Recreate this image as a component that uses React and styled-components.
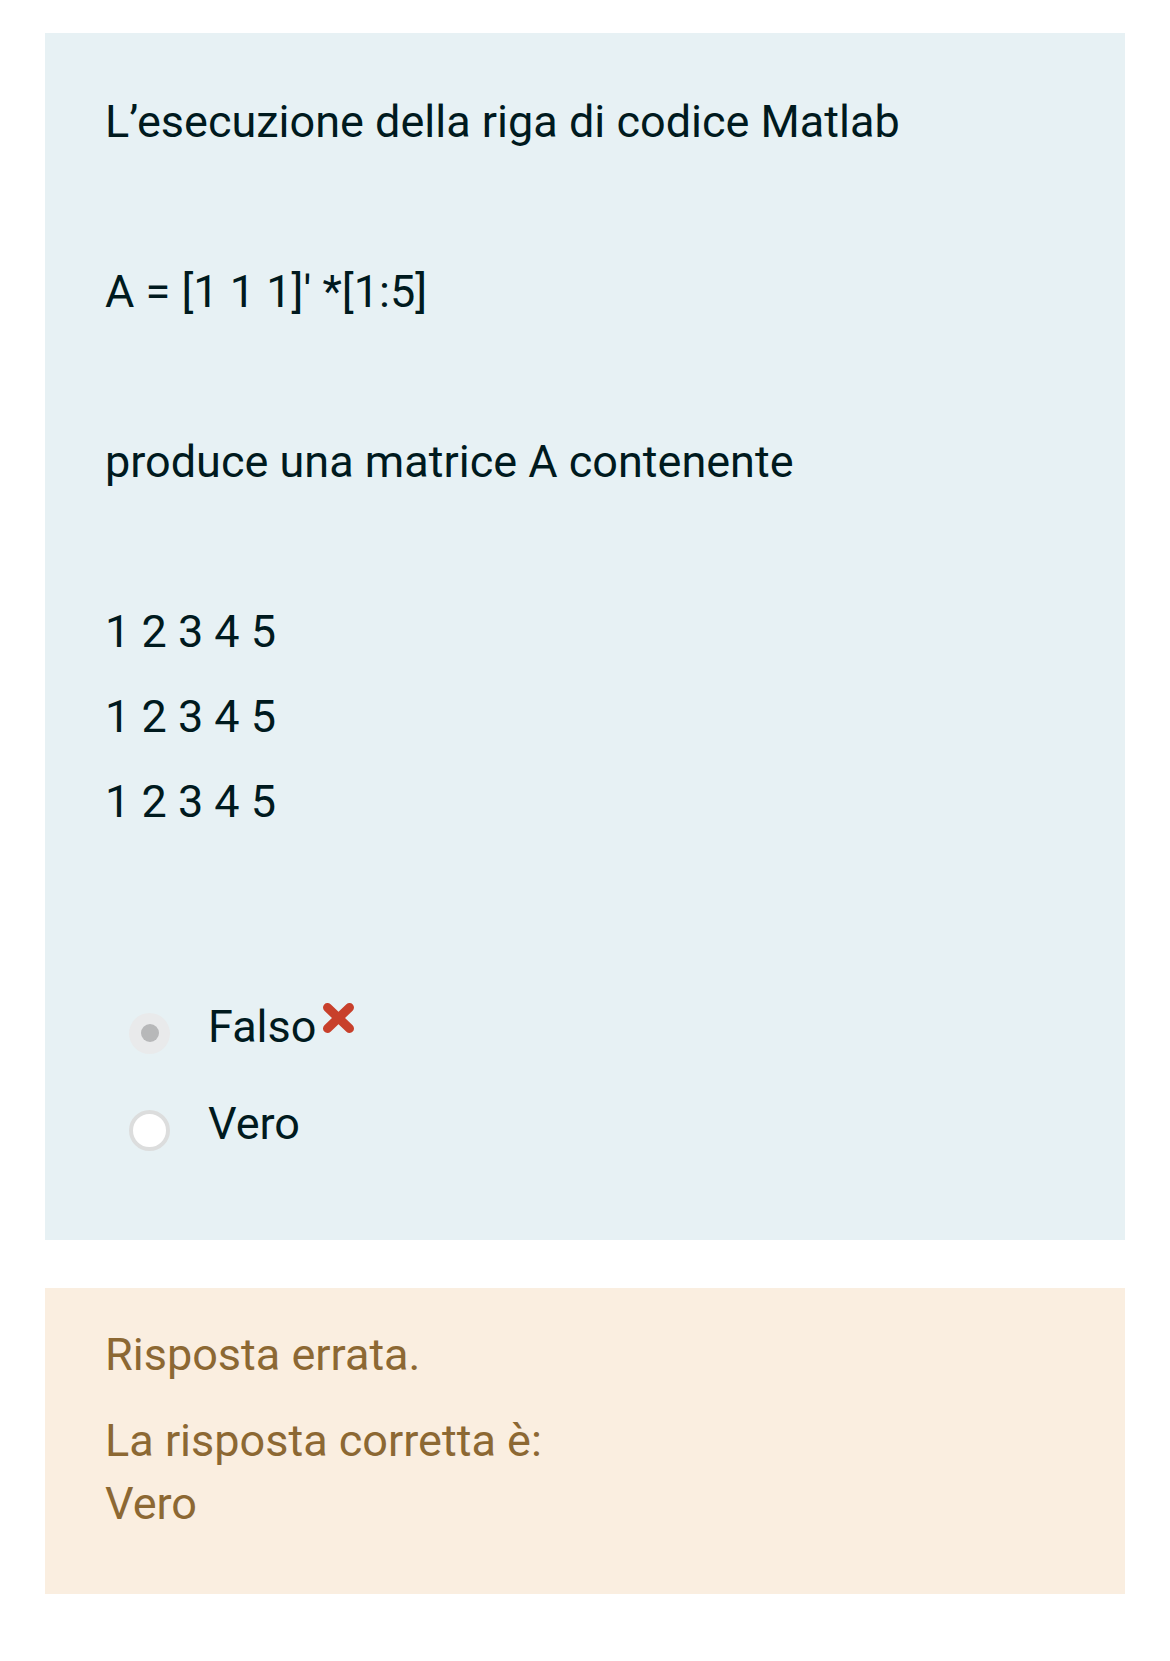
import React from "react";
import styled, { createGlobalStyle } from "styled-components";

const Global = createGlobalStyle`
  html, body { margin: 0; padding: 0; background: #ffffff; }
  body { font-family: Roboto, "Noto Sans", "Liberation Sans", sans-serif; }
`;

const Page = styled.main`
  padding: 33px 45px 68px 45px;
  display: flex;
  flex-direction: column;
  gap: 48px;
`;

const Formulation = styled.section`
  background: #e7f1f4;
  color: #001a1e;
  padding: 55px 60px 83px 60px;
  font-size: 45px;
`;

const Para = styled.p`
  margin: 0 0 17.5px 0;
  line-height: 67.5px;
  min-height: 67.5px;
  white-space: pre-wrap;
`;

const Answers = styled.div`
  margin-top: 157px;
  padding-left: 24px;
  display: flex;
  flex-direction: column;
  gap: 29.5px;
`;

const Row = styled.label`
  display: flex;
  align-items: flex-start;
  line-height: 67.5px;
`;

const Radio = styled.span`
  box-sizing: border-box;
  flex: none;
  width: 41px;
  height: 41px;
  margin-top: 20px;
  margin-right: 38px;
  border-radius: 50%;
  display: flex;
  align-items: center;
  justify-content: center;
  background: ${(p) => (p.$checked ? "#e9eaeb" : "#ffffff")};
  border: ${(p) => (p.$checked ? "none" : "4px solid #dcdddd")};
  &::after {
    content: "";
    display: ${(p) => (p.$checked ? "block" : "none")};
    width: 18px;
    height: 18px;
    border-radius: 50%;
    background: #b7b8b9;
  }
`;

const AnswerText = styled.span`
  display: inline-flex;
  align-items: flex-start;
`;

const WrongIcon = styled.svg`
  width: 33px;
  height: 32px;
  margin-left: 6px;
  margin-top: 9px;
  flex: none;
`;

const Outcome = styled.section`
  background: #faeee0;
  color: #8c6833;
  padding: 35px 60px 59px 60px;
  font-size: 45px;
  line-height: 63px;
`;

const Feedback = styled.div`
  margin-bottom: 23px;
`;

const Right = styled.div``;

const Cross = () => (
  <WrongIcon viewBox="0 0 33 32" aria-hidden="true">
    <g stroke="#c8402b" strokeWidth="9" strokeLinecap="round">
      <line x1="5.5" y1="5.5" x2="27.5" y2="26.5" />
      <line x1="27.5" y1="5.5" x2="5.5" y2="26.5" />
    </g>
  </WrongIcon>
);

export default function App() {
  return (
    <>
      <Global />
      <Page>
        <Formulation>
          <Para>L’esecuzione della riga di codice Matlab</Para>
          <Para />
          <Para>A = [1 1 1]' *[1:5]</Para>
          <Para />
          <Para>produce una matrice A contenente</Para>
          <Para />
          <Para>1 2 3 4 5</Para>
          <Para>1 2 3 4 5</Para>
          <Para>1 2 3 4 5</Para>
          <Answers>
            <Row>
              <Radio $checked />
              <AnswerText>
                Falso
                <Cross />
              </AnswerText>
            </Row>
            <Row>
              <Radio />
              <AnswerText>Vero</AnswerText>
            </Row>
          </Answers>
        </Formulation>
        <Outcome>
          <Feedback>Risposta errata.</Feedback>
          <Right>
            La risposta corretta è:
            <br />
            Vero
          </Right>
        </Outcome>
      </Page>
    </>
  );
}
